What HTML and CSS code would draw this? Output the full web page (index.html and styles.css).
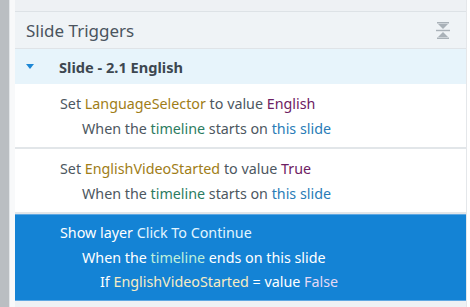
FILE: index.html
```html
<!DOCTYPE html>
<html lang="en">
<head>
    <meta charset="UTF-8">
    <title>Slide Triggers</title>
    <link rel="stylesheet" href="styles.css">
</head>
<body>
    <div class="rail"></div>
    <div class="gutter"></div>

    <!-- Triggers panel -->
    <div class="panel">
        <div class="panel-top"></div>

        <div class="panel-head">
            <span class="panel-title">Slide Triggers</span>
            <svg class="collapse-icon" width="14" height="17" viewBox="0 0 14 17">
                <rect x="1" y="0" width="12" height="1.5" fill="#a9b1b8"/>
                <polygon points="2,2 12,2 7,7" fill="#a9b1b8"/>
                <rect x="0" y="7.8" width="14" height="1.4" fill="#a9b1b8"/>
                <polygon points="7,10 12,15 2,15" fill="#a9b1b8"/>
                <rect x="1" y="15.5" width="12" height="1.5" fill="#a9b1b8"/>
            </svg>
        </div>

        <div class="group-row">
            <span class="caret"></span>
            <span class="group-name">Slide - 2.1 English</span>
        </div>

        <div class="trigger">
            <div class="line">Set <span class="var">LanguageSelector</span> to value <span class="val">English</span></div>
            <div class="line indent-1">When the <span class="tl">timeline</span> starts on <span class="obj">this slide</span></div>
        </div>

        <div class="trigger">
            <div class="line">Set <span class="var">EnglishVideoStarted</span> to value <span class="val">True</span></div>
            <div class="line indent-1">When the <span class="tl">timeline</span> starts on <span class="obj">this slide</span></div>
        </div>

        <div class="trigger selected">
            <div class="line">Show layer <span class="obj">Click To Continue</span></div>
            <div class="line indent-1">When the <span class="tl">timeline</span> ends on this slide</div>
            <div class="line indent-2">If <span class="var">EnglishVideoStarted</span> = value <span class="val">False</span></div>
        </div>

        <div class="panel-fill"></div>
    </div>

    <div class="edge"></div>
</body>
</html>
```

FILE: styles.css
```css
/* Reset */
* {
    margin: 0;
    padding: 0;
    box-sizing: border-box;
}

:root {
    --text: #4d5761;
    --head-bg: #eff3f6;
    --group-bg: #e7f4fb;
    --select: #1483d5;
    --line: #e2e6e9;
}

body {
    width: 470px;
    height: 307px;
    display: flex;
    overflow: hidden;
    font-family: "Noto Sans", "Open Sans", sans-serif;
    font-size: 14.3px;
    color: var(--text);
    background: #ffffff;
}

/* Left chrome */
.rail {
    width: 9px;
    background: #babec2;
}

.gutter {
    width: 6px;
    background: #f8f9fa;
    border-left: 1px solid #e3e6e9;
}

.edge {
    width: 4px;
    background: #ffffff;
    border-left: 1px solid #e4e7ea;
}

/* Panel */
.panel {
    flex: 1;
    display: flex;
    flex-direction: column;
    background: #ffffff;
}

.panel-top {
    height: 12px;
    background: #eef1f4;
    border-bottom: 1px solid #dde2e6;
}

.panel-head {
    height: 37px;
    display: flex;
    align-items: center;
    justify-content: space-between;
    padding: 0 16px 0 11px;
    background: var(--head-bg);
    border-bottom: 1px solid #dfe3e7;
}

.panel-title {
    font-size: 17px;
    color: #4a545e;
}

.collapse-icon {
    margin-top: 1px;
}

/* Slide group row */
.group-row {
    height: 35px;
    display: flex;
    align-items: center;
    padding-left: 11px;
    background: var(--group-bg);
}

.caret {
    width: 0;
    height: 0;
    border-left: 4.5px solid transparent;
    border-right: 4.5px solid transparent;
    border-top: 5px solid #1e87d5;
    margin-right: 25px;
}

.group-name {
    font-weight: bold;
    font-size: 14.6px;
    color: #3d4750;
}

/* Trigger rows */
.trigger {
    padding: 7px 0 6px 45px;
    line-height: 25px;
    border-bottom: 2px solid var(--line);
}

.trigger:last-of-type {
    border-bottom: none;
}

.indent-1 { padding-left: 22px; }
.indent-2 { padding-left: 40px; }

.var { color: #a07d17; }
.val { color: #6e2063; }
.tl  { color: #2c7c61; }
.obj { color: #2a7cb7; }

.trigger.selected {
    background: var(--select);
    color: #ffffff;
    padding-top: 6px;
    padding-bottom: 5px;
    line-height: 24.5px;
    border-top: 1px solid #5ea7e2;
    border-bottom: 1px solid #5ea7e2;
}

.selected .var { color: #f6ecc4; }
.selected .val { color: #e4d8f4; }
.selected .tl  { color: #bff0dc; }
.selected .obj { color: #e2f5ff; }

.panel-fill {
    flex: 1;
    background: #eef1f4;
}
```
